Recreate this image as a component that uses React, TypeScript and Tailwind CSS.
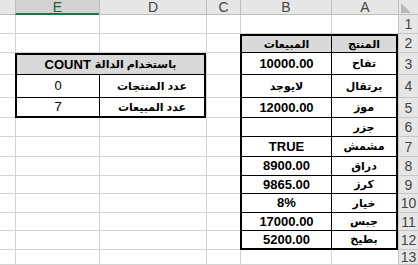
import React from "react";

// Row heights for sheet rows 1..13
const ROW_H = [
  "h-[19px]",
  "h-[19px]",
  "h-[22px]",
  "h-[23px]",
  "h-[20px]",
  "h-[19px]",
  "h-[20px]",
  "h-[19px]",
  "h-[18px]",
  "h-[19px]",
  "h-[18px]",
  "h-[19px]",
  "h-[15px]",
];

// Inner heights of the product table body rows (3..12), thick border already taken off the last
const BODY_H = [
  "h-[22px]",
  "h-[23px]",
  "h-[20px]",
  "h-[19px]",
  "h-[20px]",
  "h-[19px]",
  "h-[18px]",
  "h-[19px]",
  "h-[18px]",
  "h-[17px]",
];

const products: [string, string][] = [
  ["10000.00", "تفاح"],
  ["لايوجد", "برتقال"],
  ["12000.00", "موز"],
  ["", "جزر"],
  ["TRUE", "مشمش"],
  ["8900.00", "دراق"],
  ["9865.00", "كرز"],
  ["8%", "خيار"],
  ["17000.00", "جبس"],
  ["5200.00", "بطيخ"],
];

// latin values are drawn larger than the arabic labels
const isLatin = (s: string) => /^[0-9A-Za-z.%]+$/.test(s);

function Cell({ w, h, edge = true }: { w: string; h: string; edge?: boolean }) {
  return (
    <div
      className={`${w} ${h} shrink-0 box-border border-b border-[#d4d4d4] ${edge ? "border-l" : ""}`}
    />
  );
}

function HeaderBar() {
  const cols: [string, string][] = [
    ["D", "w-[107px]"],
    ["C", "w-[34px]"],
    ["B", "w-[91px]"],
    ["A", "w-[67px]"],
  ];
  return (
    <div className="flex h-[15px] text-[14px] leading-none text-[#444]">
      <div className="w-[15px] box-border bg-[#e6e6e6] border-b border-[#bdbdbd]" />
      <div className="w-[84px] box-border flex items-center justify-center pt-[1px] bg-[#d2d2d2] border-l border-[#bdbdbd] border-b-2 border-b-[#217346] text-[#1f5f3c]">
        E
      </div>
      {cols.map(([label, w]) => (
        <div
          key={label}
          className={`${w} box-border flex items-center justify-center bg-[#e6e6e6] border-l border-b border-[#bdbdbd]`}
        >
          {label}
        </div>
      ))}
      <div className="w-[20px] box-border bg-[#e6e6e6] border-l border-b border-[#bdbdbd] flex items-start pl-[2px] pt-[3px]">
        <svg width="10" height="10" viewBox="0 0 10 10">
          <polygon points="0,0 0,10 10,10" fill="#b9b9b9" />
        </svg>
      </div>
    </div>
  );
}

function CountTable() {
  return (
    <div className="h-[65px] box-border border-2 border-black flex flex-col text-[11px]">
      <div
        dir="rtl"
        className="h-[20px] box-border border-b border-black bg-[#d9d9d9] flex items-center justify-center gap-[4px] font-bold"
      >
        <span>باستخدام الدالة</span>
        <span className="text-[13px]">COUNT</span>
      </div>
      <div className="h-[23px] box-border border-b border-black flex">
        <div className="w-[82px] flex items-center justify-center text-[13px]">0</div>
        <div className="flex-1 border-l border-black flex items-center justify-center font-bold">
          عدد المنتجات
        </div>
      </div>
      <div className="h-[18px] flex">
        <div className="w-[82px] flex items-center justify-center text-[13px]">7</div>
        <div className="flex-1 border-l border-black flex items-center justify-center font-bold">
          عدد المبيعات
        </div>
      </div>
    </div>
  );
}

function ProductTable() {
  return (
    <div className="h-[216px] box-border border-2 border-black flex flex-col text-[11px] font-bold">
      <div className="h-[17px] shrink-0 box-border border-b border-black bg-[#d9d9d9] flex">
        <div className="w-[89px] flex items-center justify-center">المبيعات</div>
        <div className="flex-1 border-l border-black flex items-center justify-center">المنتج</div>
      </div>
      {products.map(([sales, name], i) => (
        <div
          key={name}
          className={`${BODY_H[i]} shrink-0 box-border flex ${i < products.length - 1 ? "border-b border-black" : ""}`}
        >
          <div
            className={`w-[89px] flex items-center justify-center ${isLatin(sales) ? "text-[13px]" : ""}`}
          >
            {sales}
          </div>
          <div className="flex-1 border-l border-black flex items-center justify-center">{name}</div>
        </div>
      ))}
    </div>
  );
}

export default function App() {
  return (
    <div className="w-[418px] h-[265px] overflow-hidden bg-white text-black font-['Liberation_Sans','DejaVu_Sans',sans-serif]">
      <HeaderBar />
      <div className="flex">
        {/* partial column F */}
        <div className="flex flex-col w-[15px]">
          {ROW_H.map((h, i) => (
            <Cell key={i} w="w-[15px]" h={h} edge={false} />
          ))}
        </div>

        {/* columns E and D */}
        <div className="flex flex-col w-[191px]">
          {ROW_H.slice(0, 2).map((h, i) => (
            <div key={i} className="flex">
              <Cell w="w-[84px]" h={h} />
              <Cell w="w-[107px]" h={h} />
            </div>
          ))}
          <CountTable />
          {ROW_H.slice(5).map((h, i) => (
            <div key={i} className="flex">
              <Cell w="w-[84px]" h={h} />
              <Cell w="w-[107px]" h={h} />
            </div>
          ))}
        </div>

        {/* column C */}
        <div className="flex flex-col w-[34px]">
          {ROW_H.map((h, i) => (
            <Cell key={i} w="w-[34px]" h={h} />
          ))}
        </div>

        {/* columns B and A */}
        <div className="flex flex-col w-[158px]">
          <div className="flex">
            <Cell w="w-[91px]" h={ROW_H[0]} />
            <Cell w="w-[67px]" h={ROW_H[0]} />
          </div>
          <ProductTable />
          <div className="flex">
            <Cell w="w-[91px]" h={ROW_H[12]} />
            <Cell w="w-[67px]" h={ROW_H[12]} />
          </div>
        </div>

        {/* row numbers */}
        <div className="flex flex-col w-[20px] text-[14px] leading-none text-[#444]">
          {ROW_H.map((h, i) => (
            <div
              key={i}
              className={`${h} box-border bg-[#e6e6e6] border-l border-b border-[#c6c6c6] flex items-center justify-center`}
            >
              {i + 1}
            </div>
          ))}
        </div>
      </div>
    </div>
  );
}
